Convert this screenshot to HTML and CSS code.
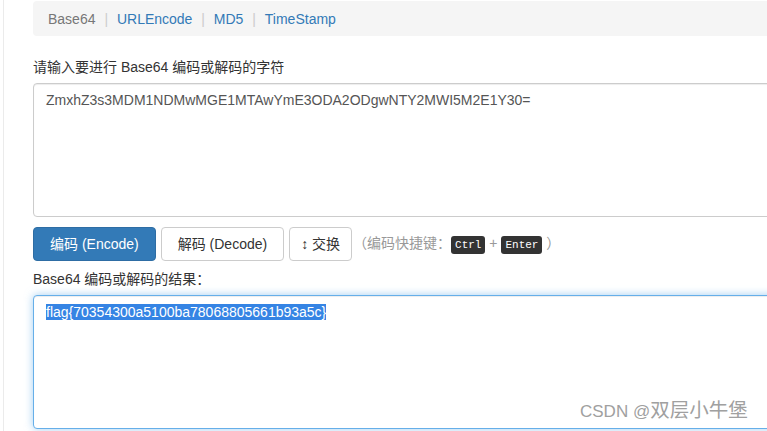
FILE: index.html
```html
<!DOCTYPE html>
<html lang="zh-CN">
<head>
<meta charset="utf-8">
<title>Base64</title>
<link rel="stylesheet" href="styles.css">
</head>
<body>
<div class="page">
  <ol class="crumbs">
    <li class="active">Base64</li>
    <li><a href="#">URLEncode</a></li>
    <li><a href="#">MD5</a></li>
    <li><a href="#">TimeStamp</a></li>
  </ol>

  <label class="label">请输入要进行 Base64 编码或解码的字符</label>
  <div class="field">ZmxhZ3s3MDM1NDMwMGE1MTAwYmE3ODA2ODgwNTY2MWI5M2E1Y30=</div>

  <div class="actions">
    <button class="btn btn-primary">编码 (Encode)</button>
    <button class="btn">解码 (Decode)</button>
    <button class="btn btn-swap">↕ 交换</button>
    <span class="hint">（编码快捷键：<kbd>Ctrl</kbd> + <kbd>Enter</kbd> ）</span>
  </div>

  <label class="label">Base64 编码或解码的结果：</label>
  <div class="field field-focus"><span class="sel">flag{70354300a5100ba78068805661b93a5c}</span></div>
</div>
<div class="watermark">CSDN @<span class="wm-cjk">双层小牛堡</span></div>
</body>
</html>
```
FILE: styles.css
```css
html, body {
  margin: 0;
  padding: 0;
  background: #fff;
  overflow: hidden;
  height: 431px;
}
body {
  font-family: "Liberation Sans", "Noto Sans CJK SC", sans-serif;
  font-size: 14px;
  line-height: 20px;
  color: #333;
  position: relative;
}
.page {
  margin-left: 3px;
  border-left: 1px solid #ebebeb;
  padding-left: 29px;
  padding-top: 1px;
  width: 900px;
  min-height: 440px;
}
.crumbs {
  list-style: none;
  margin: 0 0 21px 0;
  padding: 8px 15px 7px 15px;
  background: #f5f5f5;
  border-radius: 4px;
}
.crumbs li {
  display: inline-block;
}
.crumbs li + li:before {
  content: "|\00a0";
  padding: 0 5px;
  color: #ccc;
}
.crumbs .active {
  color: #777;
}
.crumbs a {
  color: #337ab7;
  text-decoration: none;
}
.label {
  display: block;
  margin-bottom: 6px;
  color: #333;
}
.field {
  box-sizing: border-box;
  height: 134px;
  padding: 6px 12px;
  border: 1px solid #ccc;
  border-radius: 4px;
  color: #555;
  background: #fff;
  box-shadow: inset 0 1px 1px rgba(0,0,0,.075);
}
.field-focus {
  border-color: #66afe9;
  box-shadow: inset 0 1px 1px rgba(0,0,0,.075), 0 0 8px rgba(102,175,233,.6);
}
.sel {
  background: #3584e4;
  color: #fff;
}
.actions {
  display: flex;
  align-items: center;
  gap: 5px;
  margin: 10px 0 8px 0;
}
.btn {
  font: inherit;
  line-height: 20px;
  padding: 6px 16px;
  border: 1px solid #ccc;
  border-radius: 4px;
  background: #fff;
  color: #333;
}
.btn-swap {
  padding: 6px 11px;
}
.btn-primary {
  background: #337ab7;
  border-color: #2e6da4;
  color: #fff;
}
.hint {
  color: #999;
  font-size: 14px;
  margin-left: -4px;
}
kbd {
  font-family: "Liberation Mono", monospace;
  font-size: 11px;
  padding: 3px 4px;
  background: #333;
  color: #fff;
  border-radius: 3px;
}
.watermark {
  position: absolute;
  left: 580px;
  top: 400px;
  font-size: 17px;
  color: #a0a0a0;
  white-space: nowrap;
}
.wm-cjk {
  font-size: 19.5px;
}
```
